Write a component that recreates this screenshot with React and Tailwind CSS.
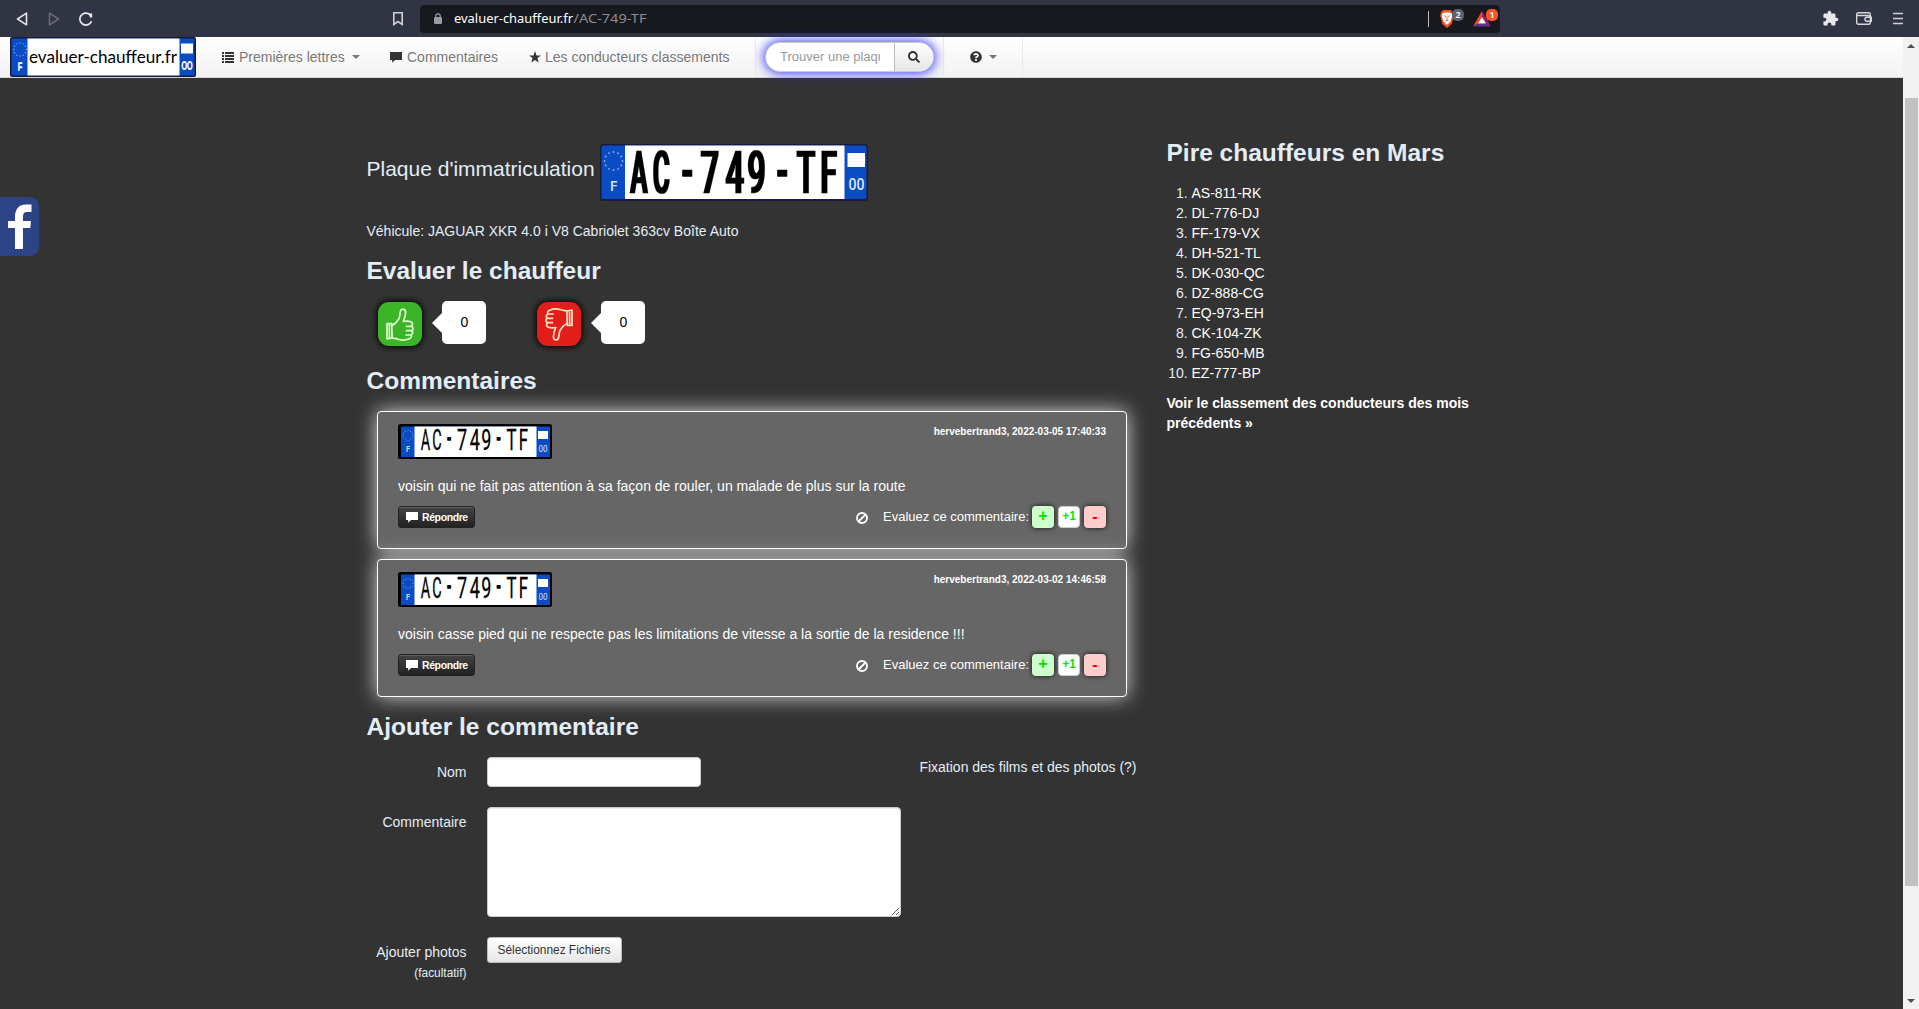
import React from "react";
import { FaSearch, FaQuestionCircle } from "react-icons/fa";
import { MdExtension } from "react-icons/md";

const EU_DOTS = Array.from({ length: 12 }, (_, i) => [
  Math.cos((i * Math.PI) / 6),
  Math.sin((i * Math.PI) / 6),
]);

function Stars({ cx, cy, rx, ry, r }) {
  return EU_DOTS.map(([x, y], i) => (
    <circle key={i} cx={cx + x * rx} cy={cy + y * ry} r={r} fill="#8fb4ea" />
  ));
}

// Each run: text, horizontal scale, glyph origins, baseline, stroke width
const LARGE_RUNS = [
  ["AC", 0.43, [30.6, 53], 48.5, 0.3],
  ["-", 0.48, [82.5], 46.5, 1.5],
  ["749", 0.54, [100.8, 125.8, 147.4], 48.5, 0.3],
  ["-", 0.48, [177.5], 46.5, 1.5],
  ["TF", 0.5, [197, 220.4], 48.5, 0.3],
];
const SMALL_RUNS = [
  ["AC", 0.48, [22.8, 34.2], 26.3, 0.3],
  ["-", 0.44, [49.3], 24, 1.6],
  ["749", 0.6, [59, 71.8, 83.3], 26.3, 0.3],
  ["-", 0.44, [98.8], 24, 1.6],
  ["TF", 0.56, [108.6, 120.8], 26.3, 0.3],
];

function PlateText({ runs, size, weight }) {
  return runs.map(([text, s, xs, y, stroke], i) => (
    <text
      key={i}
      transform={`scale(${s} 1)`}
      x={xs.map((x) => x / s).join(" ")}
      y={y}
      fontFamily="Roboto, sans-serif"
      fontWeight={weight}
      fontSize={size}
      fill="#000"
      stroke="#000"
      strokeWidth={stroke}
      strokeLinejoin="round"
    >
      {text}
    </text>
  ));
}

function Plate() {
  return (
    <svg width="268" height="57" viewBox="0 0 268 57" className="block shrink-0 overflow-visible">
      <filter id="thicken" x="0" y="0" width="100%" height="100%">
        <feMorphology operator="dilate" radius="1 0" />
      </filter>
      <rect width="268" height="57" rx="3" fill="#1c1a3e" />
      <rect x="1.5" y="1.5" width="265" height="53.5" rx="2" fill="#0a4cc4" />
      <rect x="25" y="1.5" width="219.5" height="53.5" fill="#fff" />
      <Stars cx={13.5} cy={17} rx={9} ry={9} r={0.9} />
      <text x="13.5" y="47" textAnchor="middle" fontFamily="Open Sans, sans-serif" fontWeight="600" fontSize="14.5" fill="#dbe6f8">F</text>
      <rect x="247.5" y="9" width="17.5" height="14" fill="#fff" />
      <text x="248.5" y="46" fontFamily="Roboto, sans-serif" fontWeight="500" fontSize="16.5" textLength="16" lengthAdjust="spacingAndGlyphs" fill="#dbe6f8">00</text>
      <g filter="url(#thicken)">
        <rect width="268" height="57" fill="none" />
        <PlateText runs={LARGE_RUNS} size={59} weight={500} />
      </g>
    </svg>
  );
}

function SmallPlate() {
  return (
    <svg width="154" height="35" viewBox="0 0 154 35" className="block overflow-visible">
      <rect width="154" height="35" rx="2.5" fill="#000" />
      <rect x="3" y="2.5" width="149" height="30.5" fill="#0a4cc4" />
      <rect x="16.5" y="2.5" width="122" height="30.5" fill="#fff" />
      <Stars cx={10} cy={11.5} rx={5} ry={5} r={0.5} />
      <text x="10" y="28" textAnchor="middle" fontFamily="Open Sans, sans-serif" fontWeight="600" fontSize="8" fill="#dbe6f8">F</text>
      <rect x="140" y="7" width="10" height="8" fill="#fff" />
      <text x="140.5" y="28" fontFamily="Roboto, sans-serif" fontSize="9" textLength="9" lengthAdjust="spacingAndGlyphs" fill="#dbe6f8">00</text>
      <PlateText runs={SMALL_RUNS} size={30} weight={400} />
    </svg>
  );
}

function Logo() {
  return (
    <svg width="186" height="40" viewBox="0 0 186 40" className="block shrink-0">
      <rect width="186" height="40" rx="2" fill="#141a3a" />
      <rect x="1.5" y="1.5" width="183" height="37" fill="#0a4cc4" />
      <rect x="17.5" y="1.5" width="152" height="37" fill="#fff" />
      <Stars cx={10} cy={12.5} rx={6.3} ry={6.5} r={0.7} />
      <text x="10" y="32.5" textAnchor="middle" fontFamily="Open Sans, sans-serif" fontWeight="600" fontSize="10" fill="#dbe6f8">F</text>
      <rect x="171" y="6.5" width="12" height="10" fill="#fff" />
      <text x="171.5" y="32" fontFamily="Lato, sans-serif" fontSize="11" textLength="11" lengthAdjust="spacingAndGlyphs" fill="#fff">00</text>
      <text x="19" y="26" fontFamily="Lato, sans-serif" fontSize="17.5" textLength="148" lengthAdjust="spacingAndGlyphs" fill="#000">evaluer-chauffeur.fr</text>
    </svg>
  );
}

function CommentIcon({ className }) {
  return (
    <svg width="12" height="11" viewBox="0 0 12 11" className={className} fill="currentColor">
      <path d="M0 0h12v8H5L2.2 10.8V8H0z" />
    </svg>
  );
}

function Thumb() {
  return (
    <svg width="28" height="33" viewBox="0 0 28 33" fill="none" stroke="currentColor" strokeWidth="1.7" strokeLinejoin="round" strokeLinecap="round">
      <path d="M1 15.5h4.7l.4 14.5-5.100.8zM3.300 15.500l.2 15" />
      <path d="M5.700 17.500c3.500-1.500 5.500-4 7.300-7 .9-2.500.8-4.500 1.500-7.500.5-2.600 4.400-2.600 5 .4.400 3.200-.9 7-2.200 10.100 2.500-.4 5-.6 7.200.2 2.600.8 2.400 3.600.7 4.600 2.400.6 2.500 3.700.3 4.500 1.700.8 1.400 3.700-.7 4.200 1.200 1.200.4 3.300-1.800 3.800-2.600 1.300-7 1.500-10 .7-2.500-.7-4.600-1-6.900-1.500" />
      <path d="M20.500 18.300h5M20.500 22.700h5M20 27h4.800" />
    </svg>
  );
}

function Score({ down }) {
  return (
    <div className="flex items-start">
      <div className={"flex size-11 items-center justify-center rounded-[11px] shadow-[0_0_6px_1px_#000] " + (down ? "bg-[#e21e1b] text-[#ffe3c0]" : "bg-[#3cb427] text-[#e2ffd2]")}>
        <div className={down ? "rotate-180" : ""}><Thumb /></div>
      </div>
      <svg width="10" height="20" viewBox="0 0 10 20" className="ml-2.5 mt-[11px]" fill="#fff"><path d="M10 0v20L0 10z" /></svg>
      <div className="-mt-px flex h-[43px] w-11 items-center justify-center rounded-[5px] bg-white pb-0.5 pl-0.5 text-black">0</div>
    </div>
  );
}

function Comment({ date, text }) {
  return (
    <div className="h-[138px] w-[750px] rounded border border-white bg-[#666] pl-5 pr-[20px] pt-3 text-white shadow-[0_0_20px_rgba(255,255,255,0.8)]">
      <div className="flex h-[50px] items-start justify-between">
        <SmallPlate />
        <span className="pt-px text-[10px] font-bold leading-[14px]">hervebertrand3, {date}</span>
      </div>
      <p className="h-[31px] pt-0.5">{text}</p>
      <div className="flex justify-between">
        <button className="mt-px flex h-[22px] w-[77px] items-center gap-1 rounded-[3px] border border-[#222] bg-gradient-to-b from-[#444] to-[#222] pl-[7px] text-[10.5px] font-bold leading-none tracking-[-0.4px] shadow-[inset_0_1px_0_rgba(255,255,255,0.15)]">
          <CommentIcon />
          Répondre
        </button>
        <div className="flex items-center">
          <svg width="12" height="12" viewBox="0 0 12 12" fill="none" stroke="#fff" strokeWidth="1.9" className="mr-[15px] mt-0.5"><circle cx="6" cy="6" r="5" /><path d="M2.5 9.5l7-7" /></svg>
          <span className="mr-[3px] pt-px text-[13px]">Evaluez ce commentaire:</span>
          <div className="flex gap-1 font-bold">
            <span className="flex size-[22px] items-center justify-center rounded bg-[#cfc] pb-0.5 text-[16px] text-[#00dc00] shadow-[0_0_5px_#111]">+</span>
            <span className="flex size-[22px] items-center justify-center rounded border border-[#ccc] bg-white pb-0.5 text-[11.9px] text-[#00e600]">+1</span>
            <span className="flex size-[22px] items-center justify-center rounded bg-[#fcc] text-[16px] text-[#e00] shadow-[0_0_5px_#111]">-</span>
          </div>
        </div>
      </div>
    </div>
  );
}

function BrowserBar() {
  return (
    <div className="flex h-[37px] shrink-0 items-center bg-[#313443]">
      <div className="flex w-[420px] items-center pl-4">
        <svg width="12" height="14" viewBox="0 0 12 14" fill="none" stroke="#e4e4e6" strokeWidth="1.6" strokeLinejoin="round"><path d="M10.5 1.2v11.6L1.5 7z" /></svg>
        <svg width="12" height="14" viewBox="0 0 12 14" fill="none" stroke="#6a6c79" strokeWidth="1.5" strokeLinejoin="round" className="ml-5"><path d="M1.5 1.2v11.6L10.5 7z" /></svg>
        <svg width="14" height="14" viewBox="0 0 14 14" fill="none" stroke="#e8e8ea" strokeWidth="1.7" className="ml-[19px]"><path d="M12.5 9.2A6 6 0 1 1 10.8 2.5" /><path d="M9.2 1.500h4v4h-2z" fill="#e8e8ea" stroke="none" /></svg>
        <svg width="10" height="14" viewBox="0 0 10 14" fill="none" stroke="#cfd0d4" strokeWidth="1.6" className="ml-[300px]"><path d="M.8.8h8.4v11.7L5 9.5.8 12.5z" /></svg>
      </div>
      <div className="flex h-7 w-[1080px] items-center rounded bg-[#17191f] font-['Noto_Sans','Open_Sans',sans-serif]">
        <svg width="8" height="11" viewBox="0 0 8 11" className="ml-3.5" fill="#9a9ba3"><rect y="4" width="8" height="7" rx="1" /><path d="M1.8 4.5V3a2.2 2.2 0 0 1 4.4 0v1.5" fill="none" stroke="#9a9ba3" strokeWidth="1.2" /></svg>
        <svg width="200" height="20" className="ml-3 block">
          <text x="0" y="13.5" fontSize="13" textLength="119" lengthAdjust="spacingAndGlyphs" fill="#fff">evaluer-chauffeur.fr</text>
          <text x="119.5" y="13.5" fontSize="13" textLength="73" lengthAdjust="spacingAndGlyphs" fill="#8b8c90">/AC-749-TF</text>
        </svg>
        <div className="ml-auto mr-[11px] h-4 w-px bg-[#bbb]" />
        <div className="relative mr-[19px] h-[18px] w-3.5">
          <svg width="14" height="18" viewBox="0 0 15 18" preserveAspectRatio="none">
            <path d="M3.5 0h8L14 2.5l.8 3L12.5 14l-5 4-5-4L.2 5.5l.8-3z" fill="#f4511e" />
            <path d="M2.500 3.500l2.500-1h5l2.500 1 .5 3-1.800 5-3.700 3.500L3.800 11.500 2 6.500z" fill="#fff" />
            <path d="M4.200 5.600l2.300 1M10.800 5.600l-2.300 1M7.500 6.500v3.500M5.800 11l1.700-.8 1.700.8" stroke="#f4511e" strokeWidth=".9" fill="none" />
          </svg>
          <span className="absolute -top-px left-3 flex size-3 items-center justify-center rounded-[5px] bg-[#5e6175] text-[9px] font-semibold leading-none text-white">2</span>
        </div>
        <div className="relative mr-[9px] h-[16px] w-[18px]">
          <svg width="18" height="16" viewBox="0 0 18 16"><path d="M9 0L0 15.5l5-3L9 6z" fill="#ff4724" /><path d="M9 0l9 15.5-5-3L9 6z" fill="#9e1f63" /><path d="M0 15.5h18l-5-3H5z" fill="#662d91" /><path d="M9 6l4 6.5H5z" fill="#fff" /></svg>
          <span className="absolute -top-[2px] left-[13px] flex size-3 items-center justify-center rounded-[5px] bg-[#fb542b] text-[9px] font-semibold leading-none text-white">1</span>
        </div>
      </div>
      <div className="ml-auto flex items-center pr-4">
        <MdExtension size={17} color="#e8e8ea" />
        <svg width="16" height="13" viewBox="0 0 16 13" fill="none" stroke="#d5d6d9" strokeWidth="1.4" className="ml-[17px]"><rect x=".7" y=".8" width="13.6" height="11.4" rx="1.5" /><path d="M1 3.5h11.5a1.8 1.8 0 0 1 1.8 1.8M15.3 5.3H11a2 2 0 0 0 0 4h4.300z" /></svg>
        <svg width="10" height="13" viewBox="0 0 10 13" stroke="#d0d1d4" strokeWidth="1.7" className="ml-[21px]"><path d="M0 1.5h10M0 6.5h10M0 11.5h10" /></svg>
      </div>
    </div>
  );
}

function Caret() {
  return <span className="size-0 border-x-4 border-t-4 border-x-transparent border-t-[#777]" />;
}

function Navbar() {
  return (
    <div className="flex h-[41px] items-center border-b border-[#d4d4d4] bg-gradient-to-b from-white to-[#f2f2f2] pl-2.5 text-[#777] [text-shadow:0_1px_0_#fff]">
      <div className="flex w-[212px]"><Logo /></div>
      <div className="flex w-[168px] items-center">
        <svg width="12" height="11" viewBox="0 0 12 11" fill="#333" className="mr-[5px]"><path d="M0 0h2v2H0zM3 0h9v2H3zM0 3h2v2H0zM3 3h9v2H3zM0 6h2v2H0zM3 6h9v2H3zM0 9h2v2H0zM3 9h9v2H3z" /></svg>
        <span className="mr-[7px]">Premières lettres</span>
        <Caret />
      </div>
      <div className="flex w-[139px] items-center"><CommentIcon className="mr-[5px] text-[#333]" />Commentaires</div>
      <div className="flex w-[226px] items-center">
        <svg width="12" height="12" viewBox="0 0 12 12" fill="#333" className="mr-1"><path d="M6 0l1.5 4.4H12L8.4 7.1l1.3 4.5L6 8.9l-3.7 2.7 1.3-4.5L0 4.4h4.5z" /></svg>
        Les conducteurs classements
      </div>
      <div className="flex h-10 w-[189px] items-center border-x border-x-[#eaeaea] pl-[9px]">
        <div className="flex h-[30px] w-[169px] rounded-[15px] border border-[#ccc] bg-white text-[13px] text-[#999] shadow-[0_0_12px_1px_#33f]">
          <div className="flex w-[129px] items-center border-r border-[#bbb] pl-3.5 pr-3.5"><span className="overflow-hidden whitespace-nowrap">Trouver une plaque</span></div>
          <div className="flex flex-1 items-center justify-center rounded-r-[14px] bg-gradient-to-b from-white to-[#e6e6e6]"><FaSearch size={12} color="#333" /></div>
        </div>
      </div>
      <div className="flex h-10 w-[79px] items-center gap-[7px] border-r border-[#eaeaea] pl-[26px]"><FaQuestionCircle size={12} color="#333" /><Caret /></div>
    </div>
  );
}

const WORST = ["AS-811-RK", "DL-776-DJ", "FF-179-VX", "DH-521-TL", "DK-030-QC", "DZ-888-CG", "EQ-973-EH", "CK-104-ZK", "FG-650-MB", "EZ-777-BP"];

export default function App() {
  return (
    <div className="flex h-[1009px] w-[1919px] flex-col overflow-hidden bg-[#333] font-['Liberation_Sans',Arial,sans-serif] text-[14px] leading-5 text-[#e3edf7]">
      <BrowserBar />
      <div className="flex min-h-0 flex-1">
        <div className="relative min-w-0 flex-1">
          <Navbar />
          <div className="absolute left-0 top-[160px] h-[59px] w-[39px] rounded-r-[9px] bg-[#2c4385]">
            <svg width="39" height="59" viewBox="0 0 39 59" fill="#fff"><path d="M15 52V31H8v-7h7v-4c0-8 4-12.5 11-12.5h5.5v7.5H27c-3 0-4 1.500-4 4.500V24h8l-.8 7H23v21z" /></svg>
          </div>
          <div className="flex pl-[366.5px]">
            <main className="w-[770px]">
              <div className="mt-[66px] flex h-[57px] items-center text-[21px]">
                <span className="w-[233.5px] shrink-0 whitespace-nowrap pb-[7px]">Plaque d'immatriculation</span>
                <Plate />
              </div>
              <p className="mt-5">Véhicule: JAGUAR XKR 4.0 i V8 Cabriolet 363cv Boîte Auto</p>
              <h2 className="mt-2.5 text-[24.5px] font-bold leading-10">Evaluer le chauffeur</h2>
              <div className="flex h-[60px] gap-[51px] pl-[11px] pt-[11px]">
                <Score />
                <Score down />
              </div>
              <h2 className="mt-2.5 text-[24.5px] font-bold leading-10">Commentaires</h2>
              <div className="flex flex-col gap-2.5 pl-[10.5px] pt-2.5">
                <Comment date="2022-03-05 17:40:33" text="voisin qui ne fait pas attention à sa façon de rouler, un malade de plus sur la route" />
                <Comment date="2022-03-02 14:46:58" text="voisin casse pied qui ne respecte pas les limitations de vitesse a la sortie de la residence !!!" />
              </div>
              <h2 className="mt-2.5 text-[24.5px] font-bold leading-10">Ajouter le commentaire</h2>
              <div className="mt-2.5 flex justify-between">
                <div className="grid grid-cols-[100px_414px] gap-x-5 gap-y-5">
                  <label className="pt-[5px] text-right">Nom</label>
                  <input className="h-[30px] w-[214px] rounded border border-[#ccc] bg-white shadow-[inset_0_1px_1px_rgba(0,0,0,0.075)]" />
                  <label className="pt-[5px] text-right">Commentaire</label>
                  <textarea className="block h-[110px] w-[414px] rounded border border-[#ccc] bg-white shadow-[inset_0_1px_1px_rgba(0,0,0,0.075)]" />
                  <label className="pt-[5px] text-right">Ajouter photos<br /><small className="text-[11.9px]">(facultatif)</small></label>
                  <button className="h-[26px] w-[135px] rounded-[3px] border border-[#bbb] bg-gradient-to-b from-white to-[#e6e6e6] text-[11.9px] leading-5 text-[#333]">Sélectionnez Fichiers</button>
                </div>
                <span>Fixation des films et des photos (?)</span>
              </div>
            </main>
            <aside className="ml-[30px] w-[310px] pt-[55px]">
              <h2 className="text-[24.5px] font-bold leading-10">Pire chauffeurs en Mars</h2>
              <ol className="mt-2.5 list-decimal pl-[25px]">
                {WORST.map((p) => <li key={p}><span className="text-white">{p}</span></li>)}
              </ol>
              <p className="mt-2.5 font-bold text-white">Voir le classement des conducteurs des mois précédents »</p>
            </aside>
          </div>
        </div>
        <div className="flex w-4 flex-col items-center bg-[#f1f1f1]">
          <span className="mt-[7px] size-0 border-x-4 border-b-4 border-x-transparent border-b-[#505050]" />
          <div className="mt-[50px] h-[788px] w-[13px] bg-[#c1c1c1]" />
          <span className="mb-[6px] mt-auto size-0 border-x-4 border-t-4 border-x-transparent border-t-[#505050]" />
        </div>
      </div>
    </div>
  );
}
